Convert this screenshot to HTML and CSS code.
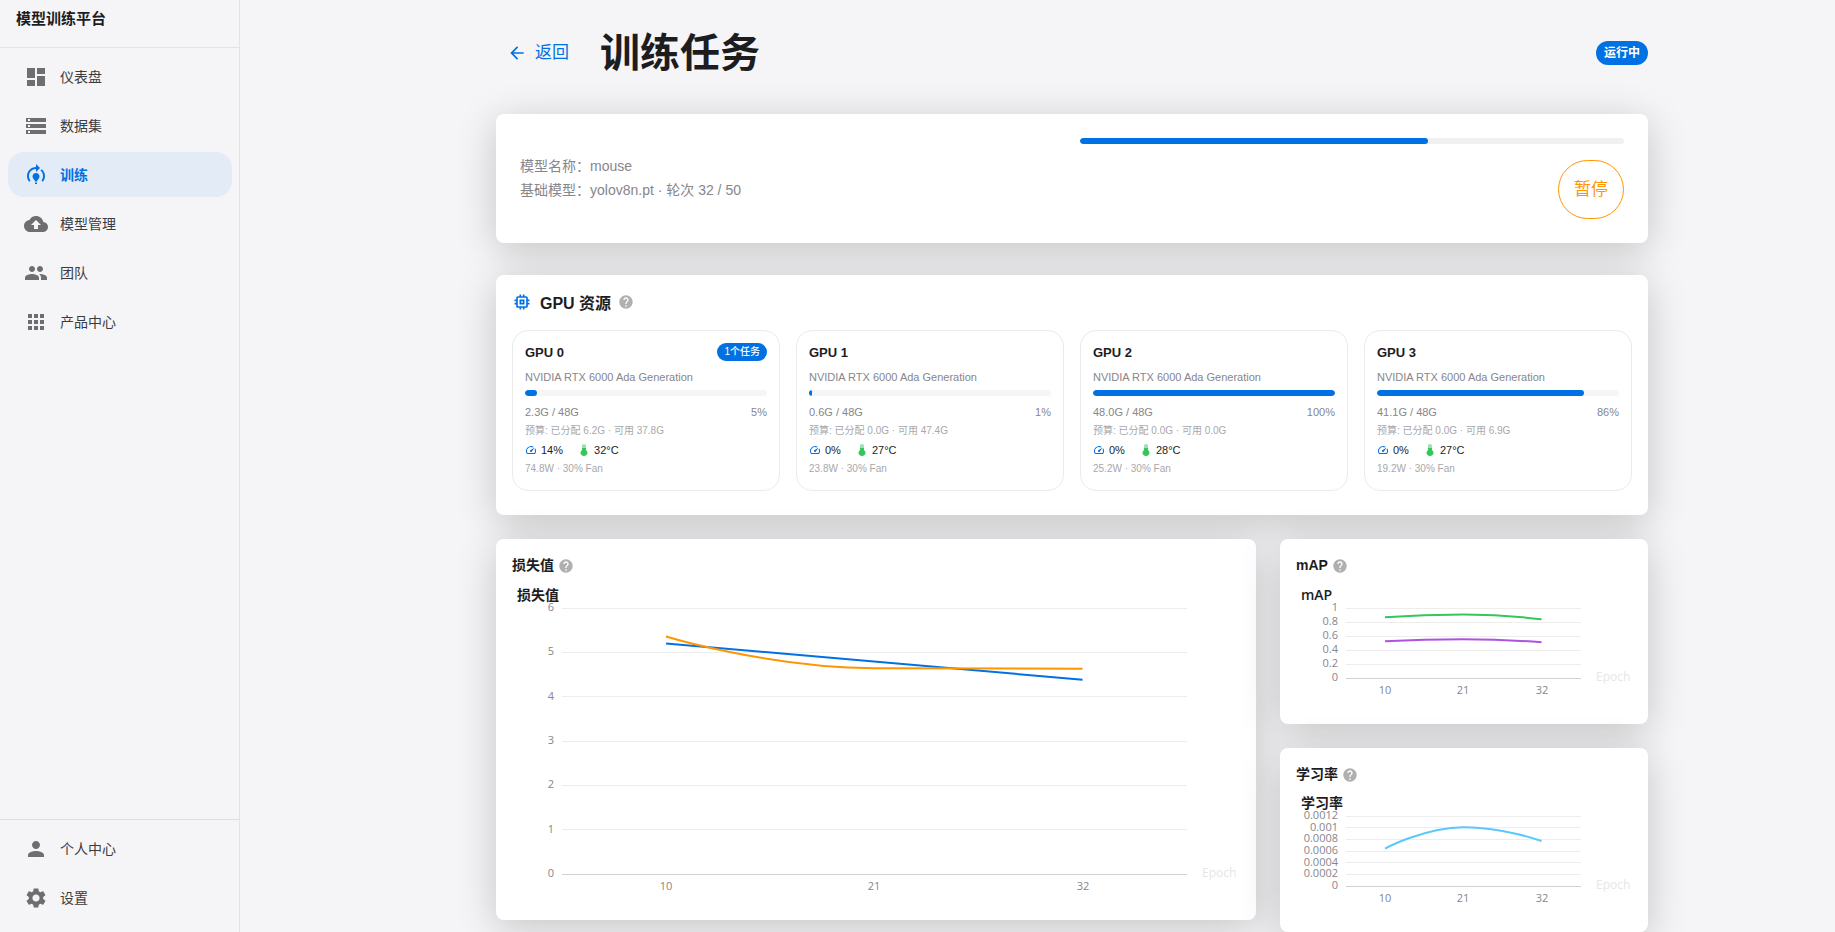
FILE: index.html
```
<!DOCTYPE html>
<html lang="zh-CN">
<head>
  <meta charset="UTF-8">
  <meta name="viewport" content="width=device-width, initial-scale=1.0">
  <title>模型训练平台</title>
  <link rel="stylesheet" href="styles.css">
</head>
<body>
  <aside class="sidebar">
    <div class="brand">模型训练平台</div>
    <nav class="nav">
      <a class="nav-item" href="#">
        <svg viewBox="0 0 24 24"><path d="M3 13h8V3H3v10zm0 8h8v-6H3v6zm10 0h8V11h-8v10zm0-18v6h8V3h-8z"/></svg>
        <span>仪表盘</span>
      </a>
      <a class="nav-item" href="#">
        <svg viewBox="0 0 24 24"><path d="M2 20h20v-4H2v4zm2-3h2v2H4v-2zM2 4v4h20V4H2zm4 3H4V5h2v2zm-4 7h20v-4H2v4zm2-3h2v2H4v-2z"/></svg>
        <span>数据集</span>
      </a>
      <a class="nav-item active" href="#">
        <svg viewBox="0 0 24 24"><path d="M15.5 13.5c0 2-2.5 3.5-2.5 5h-2c0-1.500-2.500-3-2.500-5 0-1.930 1.570-3.500 3.500-3.500s3.500 1.570 3.500 3.500zM13 19.500h-2V21h2v-1.500zM19 13c0 1.680-.590 3.210-1.580 4.420l1.420 1.420C20.180 17.270 21 15.230 21 13c0-2.740-1.230-5.190-3.160-6.840l-1.420 1.420C17.990 8.860 19 10.820 19 13zM16 5l-4-4v3c-4.970 0-9 4.030-9 9 0 2.230.820 4.270 2.160 5.840l1.420-1.420C5.590 16.210 5 14.680 5 13c0-3.860 3.140-7 7-7v3l4-4z"/></svg>
        <span>训练</span>
      </a>
      <a class="nav-item" href="#">
        <svg viewBox="0 0 24 24"><path d="M19.350 10.040C18.670 6.590 15.640 4 12 4 9.110 4 6.600 5.640 5.350 8.040 2.340 8.360 0 10.910 0 14c0 3.310 2.690 6 6 6h13c2.760 0 5-2.240 5-5 0-2.640-2.050-4.780-4.650-4.960zM14 13v4h-4v-4H7l5-5 5 5h-3z"/></svg>
        <span>模型管理</span>
      </a>
      <a class="nav-item" href="#">
        <svg viewBox="0 0 24 24"><path d="M16 11c1.660 0 2.990-1.340 2.990-3S17.660 5 16 5s-3 1.340-3 3 1.340 3 3 3zm-8 0c1.660 0 2.990-1.340 2.990-3S9.660 5 8 5 5 6.340 5 8s1.340 3 3 3zm0 2c-2.330 0-7 1.170-7 3.500V19h14v-2.500c0-2.330-4.670-3.500-7-3.500zm8 0c-.290 0-.620.020-.970.050 1.160.840 1.970 1.970 1.970 3.450V19h6v-2.500c0-2.330-4.670-3.500-7-3.500z"/></svg>
        <span>团队</span>
      </a>
      <a class="nav-item" href="#">
        <svg viewBox="0 0 24 24"><path d="M4 8h4V4H4v4zm6 12h4v-4h-4v4zm-6 0h4v-4H4v4zm0-6h4v-4H4v4zm6 0h4v-4h-4v4zm6-10v4h4V4h-4zm-6 4h4V4h-4v4zm6 6h4v-4h-4v4zm0 6h4v-4h-4v4z"/></svg>
        <span>产品中心</span>
      </a>
    </nav>
    <nav class="nav nav-bottom">
      <a class="nav-item" href="#">
        <svg viewBox="0 0 24 24"><path d="M12 12c2.210 0 4-1.790 4-4s-1.790-4-4-4-4 1.790-4 4 1.790 4 4 4zm0 2c-2.670 0-8 1.340-8 4v2h16v-2c0-2.660-5.330-4-8-4z"/></svg>
        <span>个人中心</span>
      </a>
      <a class="nav-item" href="#">
        <svg viewBox="0 0 24 24"><path d="M19.140 12.940c.040-.300.060-.610.060-.940 0-.320-.020-.640-.070-.940l2.030-1.580c.180-.140.230-.410.120-.610l-1.920-3.320c-.120-.220-.370-.290-.590-.220l-2.390.960c-.500-.380-1.030-.700-1.620-.940l-.360-2.540c-.040-.240-.240-.410-.480-.410h-3.840c-.240 0-.430.170-.470.410l-.360 2.540c-.590.240-1.130.570-1.620.940l-2.390-.960c-.220-.080-.470 0-.590.220L2.740 8.870c-.120.210-.080.470.120.610l2.030 1.580c-.050.300-.090.630-.090.940s.020.640.070.940l-2.030 1.580c-.180.140-.230.410-.120.610l1.920 3.320c.120.220.370.290.590.220l2.390-.960c.500.380 1.030.700 1.620.940l.360 2.540c.050.240.240.410.480.410h3.840c.240 0 .440-.170.470-.410l.360-2.540c.590-.240 1.130-.560 1.620-.940l2.390.960c.220.080.470 0 .590-.220l1.920-3.320c.120-.220.070-.470-.120-.610l-2.010-1.580zM12 15.600c-1.980 0-3.600-1.620-3.600-3.600s1.620-3.600 3.600-3.600 3.600 1.620 3.600 3.600-1.620 3.600-3.600 3.600z"/></svg>
        <span>设置</span>
      </a>
    </nav>
  </aside>

  <!-- shared icons -->
  <svg class="sprite" aria-hidden="true">
    <symbol id="i-help" viewBox="0 0 24 24"><path d="M12 2C6.480 2 2 6.480 2 12s4.480 10 10 10 10-4.480 10-10S17.520 2 12 2zm1 17h-2v-2h2v2zm2.070-7.750l-.900.920C13.450 12.900 13 13.500 13 15h-2v-.500c0-1.100.450-2.100 1.170-2.830l1.240-1.260c.370-.360.590-.860.590-1.410 0-1.100-.900-2-2-2s-2 .900-2 2H8c0-2.210 1.790-4 4-4s4 1.790 4 4c0 .880-.360 1.680-.930 2.250z"/></symbol>
    <symbol id="i-speed" viewBox="0 0 24 24"><path d="M20.380 8.570l-1.230 1.850a8 8 0 0 1-.220 7.580H5.070A8 8 0 0 1 15.580 6.850l1.850-1.230A10 10 0 0 0 3.350 19a2 2 0 0 0 1.720 1h13.850a2 2 0 0 0 1.740-1 10 10 0 0 0-.270-10.440zm-9.790 6.840a2 2 0 0 0 2.830 0l5.660-8.490-8.490 5.660a2 2 0 0 0 0 2.830z"/></symbol>
    <symbol id="i-temp" viewBox="0 0 24 24"><path opacity=".5" d="M8 13V4c0-2.200 1.800-4 4-4s4 1.800 4 4v9z"/><path d="M16 12.500V8H8v4.500c-1.800 1.200-3 3-3 5 0 3.600 3.100 6.500 7 6.500s7-2.900 7-6.500c0-2-1.200-3.800-3-5z"/></symbol>
  </svg>

  <main class="main">
    <div class="content">
      <header class="page-head">
        <button class="back" type="button">
          <svg viewBox="0 0 24 24"><path d="M20 11H7.830l5.590-5.590L12 4l-8 8 8 8 1.410-1.410L7.830 13H20v-2z"/></svg>
          返回
        </button>
        <h1>训练任务</h1>
        <span class="status">运行中</span>
      </header>

      <section class="card task">
        <div class="task-info">
          <div>模型名称：mouse</div>
          <div>基础模型：yolov8n.pt · 轮次 32 / 50</div>
        </div>
        <div class="task-side">
          <div class="bar"><div class="fill" style="width: 64%"></div></div>
          <button class="pause" type="button">暂停</button>
        </div>
      </section>

      <section class="card gpu">
        <div class="gpu-head">
          <svg class="chip" viewBox="0 0 24 24"><path d="M15 9H9v6h6V9zm-2 4h-2v-2h2v2zm8-2V9h-2V7c0-1.100-.900-2-2-2h-2V3h-2v2h-2V3H9v2H7c-1.100 0-2 .900-2 2v2H3v2h2v2H3v2h2v2c0 1.100.900 2 2 2h2v2h2v-2h2v2h2v-2h2c1.100 0 2-.900 2-2v-2h2v-2h-2v-2h2zm-4 6H7V7h10v10z"/></svg>
          <h2>GPU 资源</h2>
          <svg class="help"><use href="#i-help"/></svg>
        </div>
        <div class="gpu-grid">
          <div class="gpu-card">
            <div class="gpu-top"><h3>GPU 0</h3><span class="badge">1个任务</span></div>
            <div class="gpu-name">NVIDIA RTX 6000 Ada Generation</div>
            <div class="bar"><div class="fill" style="width: 4.8%"></div></div>
            <div class="gpu-mem"><span>2.3G / 48G</span><span>5%</span></div>
            <div class="gpu-note">预算: 已分配 6.2G · 可用 37.8G</div>
            <div class="gpu-stats">
              <svg class="speed"><use href="#i-speed"/></svg><span>14%</span>
              <svg class="temp"><use href="#i-temp"/></svg><span>32°C</span>
            </div>
            <div class="gpu-note">74.8W · 30% Fan</div>
          </div>
          <div class="gpu-card">
            <div class="gpu-top"><h3>GPU 1</h3></div>
            <div class="gpu-name">NVIDIA RTX 6000 Ada Generation</div>
            <div class="bar"><div class="fill" style="width: 1.3%"></div></div>
            <div class="gpu-mem"><span>0.6G / 48G</span><span>1%</span></div>
            <div class="gpu-note">预算: 已分配 0.0G · 可用 47.4G</div>
            <div class="gpu-stats">
              <svg class="speed"><use href="#i-speed"/></svg><span>0%</span>
              <svg class="temp"><use href="#i-temp"/></svg><span>27°C</span>
            </div>
            <div class="gpu-note">23.8W · 30% Fan</div>
          </div>
          <div class="gpu-card">
            <div class="gpu-top"><h3>GPU 2</h3></div>
            <div class="gpu-name">NVIDIA RTX 6000 Ada Generation</div>
            <div class="bar"><div class="fill" style="width: 100%"></div></div>
            <div class="gpu-mem"><span>48.0G / 48G</span><span>100%</span></div>
            <div class="gpu-note">预算: 已分配 0.0G · 可用 0.0G</div>
            <div class="gpu-stats">
              <svg class="speed"><use href="#i-speed"/></svg><span>0%</span>
              <svg class="temp"><use href="#i-temp"/></svg><span>28°C</span>
            </div>
            <div class="gpu-note">25.2W · 30% Fan</div>
          </div>
          <div class="gpu-card">
            <div class="gpu-top"><h3>GPU 3</h3></div>
            <div class="gpu-name">NVIDIA RTX 6000 Ada Generation</div>
            <div class="bar"><div class="fill" style="width: 85.6%"></div></div>
            <div class="gpu-mem"><span>41.1G / 48G</span><span>86%</span></div>
            <div class="gpu-note">预算: 已分配 0.0G · 可用 6.9G</div>
            <div class="gpu-stats">
              <svg class="speed"><use href="#i-speed"/></svg><span>0%</span>
              <svg class="temp"><use href="#i-temp"/></svg><span>27°C</span>
            </div>
            <div class="gpu-note">19.2W · 30% Fan</div>
          </div>
        </div>
      </section>

      <div class="charts">
        <section class="card chart-card loss">
          <h4>损失值 <svg class="help"><use href="#i-help"/></svg></h4>
          <svg class="chart" viewBox="0 0 728 320">
            <text class="c-title" x="5" y="16">损失值</text>
            <path class="grid" d="M50 24.5H675M50 68.5H675M50 112.5H675M50 157.5H675M50 201.5H675M50 245.5H675"/>
            <path class="axis" d="M50 290.5H675"/>
            <g class="y-labels">
              <text x="42" y="27">6</text>
              <text x="42" y="71">5</text>
              <text x="42" y="116">4</text>
              <text x="42" y="160">3</text>
              <text x="42" y="204">2</text>
              <text x="42" y="249">1</text>
              <text x="42" y="293">0</text>
            </g>
            <g class="x-labels">
              <text x="154" y="306">10</text>
              <text x="362" y="306">21</text>
              <text x="571" y="306">32</text>
            </g>
            <text class="c-name" x="690" y="293">Epoch</text>
            <path class="line blue" d="M154 59.500L362 77.500L570.500 95.700"/>
            <path class="line orange" d="M154 52.500C154 52.500 258 84 362 84.200C466 84.400 570.500 84.700 570.500 84.700"/>
          </svg>
        </section>

        <div class="chart-col">
          <section class="card chart-card">
            <h4>mAP <svg class="help"><use href="#i-help"/></svg></h4>
            <svg class="chart" viewBox="0 0 336 124">
              <text class="c-title" x="5" y="16">mAP</text>
              <path class="grid" d="M50 24.5H285M50 38.5H285M50 52.5H285M50 66.5H285M50 80.5H285"/>
              <path class="axis" d="M50 94.5H285"/>
              <g class="y-labels">
                <text x="42" y="27">1</text>
                <text x="42" y="41">0.8</text>
                <text x="42" y="55">0.6</text>
                <text x="42" y="69">0.4</text>
                <text x="42" y="83">0.2</text>
                <text x="42" y="97">0</text>
              </g>
              <g class="x-labels">
                <text x="89" y="110">10</text>
                <text x="167" y="110">21</text>
                <text x="246" y="110">32</text>
              </g>
              <text class="c-name" x="300" y="97">Epoch</text>
              <path class="line green" d="M89 33.200C89 33.200 128 30.500 167.500 30.500C206 30.500 245.500 35.300 245.500 35.300"/>
              <path class="line purple" d="M89 57.300C89 57.300 128 55.200 167.500 55.200C206 55.200 245.500 58.300 245.500 58.300"/>
            </svg>
          </section>

          <section class="card chart-card">
            <h4>学习率 <svg class="help"><use href="#i-help"/></svg></h4>
            <svg class="chart" viewBox="0 0 336 123">
              <text class="c-title" x="5" y="15">学习率</text>
              <path class="grid" d="M50 23.5H285M50 34.5H285M50 46.5H285M50 58.5H285M50 69.5H285M50 81.5H285"/>
              <path class="axis" d="M50 93.5H285"/>
              <g class="y-labels">
                <text x="42" y="26">0.0012</text>
                <text x="42" y="38">0.001</text>
                <text x="42" y="49">0.0008</text>
                <text x="42" y="61">0.0006</text>
                <text x="42" y="73">0.0004</text>
                <text x="42" y="84">0.0002</text>
                <text x="42" y="96">0</text>
              </g>
              <g class="x-labels">
                <text x="89" y="109">10</text>
                <text x="167" y="109">21</text>
                <text x="246" y="109">32</text>
              </g>
              <text class="c-name" x="300" y="96">Epoch</text>
              <path class="line sky" d="M89 55.600C89 55.600 128 34.500 167.500 34.200C206 33.900 245.500 48 245.500 48"/>
            </svg>
          </section>
        </div>
      </div>
    </div>
  </main>
</body>
</html>
```

FILE: styles.css
```
* {
  box-sizing: border-box;
}
body {
  margin: 0;
  display: flex;
  min-height: 100vh;
  background: #f5f5f7;
  color: #1d1d1f;
  font-family: "Liberation Sans", "Noto Sans CJK SC", sans-serif;
  font-size: 14px;
}
h1, h2, h3, h4 {
  margin: 0;
}
button {
  font-family: inherit;
  background: none;
  border: none;
  cursor: pointer;
}
svg {
  display: block;
  fill: currentColor;
}
.sprite {
  display: none;
}

/* sidebar */
.sidebar {
  position: sticky;
  top: 0;
  display: flex;
  flex-direction: column;
  flex: none;
  width: 240px;
  height: 100vh;
  border-right: 1px solid #e3e3e6;
}
.brand {
  height: 48px;
  padding: 8px 16px;
  border-bottom: 1px solid #e3e3e6;
  font-size: 15px;
  font-weight: bold;
  line-height: 22px;
}
.nav {
  display: flex;
  flex-direction: column;
  gap: 4px;
  padding: 6px 7px 12px 8px;
}
.nav-bottom {
  margin-top: auto;
  border-top: 1px solid #dddde0;
}
.nav-item {
  display: flex;
  align-items: center;
  gap: 12px;
  height: 45px;
  padding: 0 16px;
  border-radius: 16px;
  color: #3c3c3e;
  line-height: 20px;
  text-decoration: none;
}
.nav-item svg {
  width: 24px;
  height: 24px;
  color: #6e6e70;
}
.nav-item.active {
  background: #e3ebf6;
  color: #0071e3;
  font-weight: bold;
}
.nav-item.active svg {
  color: #0071e3;
}

/* page */
.main {
  flex: 1;
  min-width: 0;
  padding-left: 69px;
}
.content {
  max-width: 1152px;
  margin: 0 auto;
}
.page-head {
  display: flex;
  align-items: center;
  height: 114px;
  padding-bottom: 9px;
}
.back {
  display: flex;
  align-items: center;
  gap: 8px;
  padding: 0 11px;
  color: #0071e3;
  font-size: 17px;
  line-height: 24px;
}
.back svg {
  width: 20px;
  height: 20px;
}
.page-head h1 {
  margin-left: 20px;
  font-size: 40px;
  line-height: 48px;
}
.status {
  margin-left: auto;
  padding: 0 8px;
  border-radius: 12px;
  background: #0071e3;
  color: #fff;
  font-size: 12px;
  font-weight: bold;
  line-height: 24px;
}
.card {
  border-radius: 8px;
  background: #fff;
  box-shadow: 0 8px 40px rgba(0, 0, 0, 0.2);
}
.bar {
  height: 6px;
  border-radius: 3px;
  background: #f5f5f5;
  overflow: hidden;
}
.fill {
  height: 100%;
  border-radius: 3px;
  background: #0071e3;
}

/* task */
.task {
  display: flex;
  align-items: center;
  padding: 24px;
  margin-bottom: 32px;
}
.task-info {
  flex: 1;
  padding-bottom: 2px;
  color: #86868b;
  line-height: 24px;
}
.task-side {
  display: flex;
  flex-direction: column;
  align-items: flex-end;
  gap: 16px;
  width: 544px;
}
.task-side .bar {
  width: 100%;
  background: #f0f0f0;
}
.pause {
  padding: 16px 15px;
  border: 1px solid #ff9500;
  border-radius: 30px;
  color: #ff9500;
  font-size: 17px;
  line-height: 25px;
}

/* gpu */
.gpu {
  padding: 16px 16px 24px;
  margin-bottom: 24px;
}
.gpu-head {
  display: flex;
  align-items: center;
  height: 21px;
  margin-bottom: 18px;
}
.chip {
  width: 20px;
  height: 20px;
  color: #0071e3;
}
.gpu-head h2 {
  margin: 0 7px 0 8px;
  font-size: 16px;
}
.help {
  width: 16px;
  height: 16px;
  color: #b0b0b0;
}
.gpu-grid {
  display: grid;
  grid-template-columns: repeat(4, 1fr);
  gap: 16px;
}
.gpu-card {
  padding: 12px 12px 11px;
  border: 1px solid #ebebeb;
  border-radius: 16px;
}
.gpu-top {
  display: flex;
  align-items: center;
  justify-content: space-between;
  height: 18px;
  margin-bottom: 8px;
}
.gpu-top h3 {
  font-size: 13px;
}
.badge {
  padding: 0 7px;
  border-radius: 9px;
  background: #0071e3;
  color: #fff;
  font-size: 10px;
  font-weight: 500;
  line-height: 18px;
}
.gpu-name {
  margin-bottom: 4px;
  color: #86868b;
  font-size: 11px;
  line-height: 17px;
}
.gpu-mem {
  display: flex;
  justify-content: space-between;
  margin-top: 8px;
  color: #86868b;
  font-size: 11px;
  line-height: 17px;
}
.gpu-note {
  color: #a8a8ab;
  font-size: 10px;
  line-height: 20px;
}
.gpu-stats {
  display: flex;
  align-items: center;
  font-size: 11px;
  line-height: 18px;
}
.gpu-stats svg {
  width: 12px;
  height: 12px;
  margin-right: 4px;
}
.speed {
  color: #0071e3;
}
.gpu-stats .temp {
  margin-left: 15px;
  color: #34c759;
}

/* charts */
.charts {
  display: grid;
  grid-template-columns: repeat(3, 1fr);
  align-items: start;
  gap: 24px;
}
.loss {
  grid-column: span 2;
}
.chart-col {
  display: flex;
  flex-direction: column;
  gap: 24px;
}
.chart-card {
  padding: 16px;
}
.chart-card h4 {
  display: flex;
  align-items: center;
  gap: 4px;
  margin-bottom: 8px;
  font-size: 14px;
  line-height: 21px;
}
.chart {
  width: 100%;
  height: auto;
  font-family: "Open Sans", "Noto Sans CJK SC", sans-serif;
}
.c-title {
  fill: #1d1d1f;
  font-size: 14px;
  font-weight: 600;
}
.c-name {
  fill: #e6e6e8;
  font-size: 12px;
}
.grid {
  stroke: #ededed;
}
.axis {
  stroke: #d2d2d4;
}
.y-labels, .x-labels {
  fill: #86868b;
  font-size: 11px;
}
.y-labels {
  text-anchor: end;
}
.x-labels {
  text-anchor: middle;
}
.line {
  fill: none;
  stroke-width: 2;
}
.blue { stroke: #0071e3; }
.orange { stroke: #ff9500; }
.green { stroke: #34c759; }
.purple { stroke: #af52de; }
.sky { stroke: #5ac8fa; }
```
